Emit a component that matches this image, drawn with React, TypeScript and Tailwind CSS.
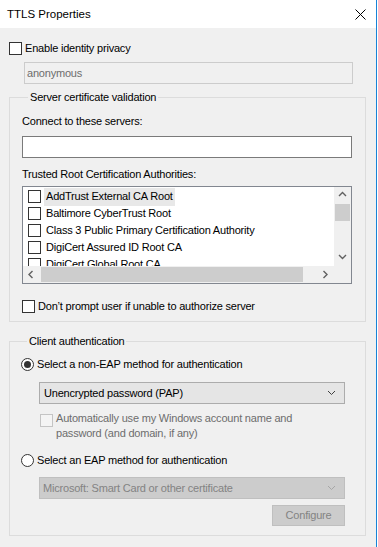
import { useState } from 'react';

const certs = [
  'AddTrust External CA Root',
  'Baltimore CyberTrust Root',
  'Class 3 Public Primary Certification Authority',
  'DigiCert Assured ID Root CA',
  'DigiCert Global Root CA',
];

function Box({ disabled = false }: { disabled?: boolean }) {
  return (
    <span
      className={
        disabled
          ? 'block w-[13px] h-[13px] shrink-0 border border-[#c4c4c4] bg-[#f4f4f4]'
          : 'block w-[13px] h-[13px] shrink-0 border border-[#333333] bg-white'
      }
    />
  );
}

function Radio({ checked }: { checked: boolean }) {
  return (
    <svg width="13" height="13" viewBox="0 0 13 13" className="shrink-0">
      <circle cx="6.5" cy="6.5" r="6" fill="#ffffff" stroke="#333333" strokeWidth="1" />
      {checked && <circle cx="6.5" cy="6.5" r="3.5" fill="#333333" />}
    </svg>
  );
}

function Chevron({ dir, color = '#606060' }: { dir: 'up' | 'down' | 'left' | 'right'; color?: string }) {
  const d = {
    up: 'M1 5 L4.5 1.5 L8 5',
    down: 'M1 2 L4.5 5.5 L8 2',
    left: 'M5.5 1 L2 4.5 L5.5 8',
    right: 'M2.5 1 L6 4.5 L2.5 8',
  }[dir];
  return (
    <svg width="9" height="9" viewBox="0 0 9 9">
      <path d={d} fill="none" stroke={color} strokeWidth="1.4" />
    </svg>
  );
}

function SelectArrow({ color }: { color: string }) {
  return (
    <svg width="9" height="6" viewBox="0 0 9 6">
      <path d="M1 1 L4.5 4.5 L8 1" fill="none" stroke={color} strokeWidth="1" />
    </svg>
  );
}

export default function App() {
  const [method, setMethod] = useState<'pap' | 'eap'>('pap');

  return (
    <div className="w-[378px] h-[547px] flex bg-white font-['Liberation_Sans',Arial,sans-serif] text-[11px] leading-[15px] tracking-[-0.2px] text-black overflow-hidden">
      <div className="w-[376px] flex flex-col bg-[#f0f0f0]">
        {/* title bar */}
        <div className="h-[28px] shrink-0 bg-white flex items-center justify-between pl-[7px] pr-[10px]">
          <span className="text-[11.5px] tracking-normal">TTLS Properties</span>
          <svg width="11" height="11" viewBox="0 0 11 11">
            <path d="M0.5 0.5 L10.5 10.5 M10.5 0.5 L0.5 10.5" stroke="#000" strokeWidth="1" />
          </svg>
        </div>

        <div className="flex items-center pl-[9px] mt-[14px] h-[13px]">
          <Box />
          <span className="ml-[3px]">Enable identity privacy</span>
        </div>

        <div className="ml-[24px] mt-[7px] w-[329px] h-[22px] border border-[#cccccc] bg-[#f0f0f0] text-[#6d6d6d] flex items-center px-[2px]">
          anonymous
        </div>

        {/* server certificate validation */}
        <fieldset className="ml-[9px] mt-[6px] w-[357px] border border-[#dcdcdc] pl-[12px] pb-[8px]">
          <legend className="ml-[6px] px-[2px]">Server certificate validation</legend>
          <div className="mt-[9px]">Connect to these servers:</div>
          <div className="mt-[7px] w-[330px] h-[22px] border border-[#7a7a7a] bg-white" />
          <div className="mt-[9px]">Trusted Root Certification Authorities:</div>

          <div className="mt-[4px] w-[330px] h-[98px] border border-[#828790] flex flex-col">
            <div className="flex h-[79px]">
              <div className="flex-1 bg-white overflow-hidden pt-[1px]">
                {certs.map((c, i) => (
                  <div key={c} className="h-[17px] flex items-center pl-[5px]">
                    <Box />
                    <span className={i === 0 ? 'ml-[3px] px-[2px] bg-[#e8e8e8] h-[18px] flex items-center' : 'ml-[3px] px-[2px]'}>
                      {c}
                    </span>
                  </div>
                ))}
              </div>
              <div className="w-[17px] bg-[#f0f0f0] flex flex-col">
                <div className="h-[17px] flex items-center justify-center">
                  <Chevron dir="up" />
                </div>
                <div className="h-[17px] mx-[1px] bg-[#cdcdcd]" />
                <div className="flex-1" />
                <div className="h-[17px] flex items-center justify-center">
                  <Chevron dir="down" />
                </div>
              </div>
            </div>
            <div className="flex h-[17px] bg-[#f0f0f0]">
              <div className="w-[17px] flex items-center justify-center">
                <Chevron dir="left" />
              </div>
              <div className="ml-[1px] w-[262px] my-[1px] bg-[#cdcdcd]" />
              <div className="flex-1" />
              <div className="w-[17px] flex items-center justify-center">
                <Chevron dir="right" />
              </div>
              <div className="w-[17px]" />
            </div>
          </div>

          <div className="flex items-center mt-[16px] h-[13px]">
            <Box />
            <span className="ml-[3px]">Don’t prompt user if unable to authorize server</span>
          </div>
        </fieldset>

        {/* client authentication */}
        <fieldset className="ml-[9px] mt-[12px] w-[357px] border border-[#dcdcdc] pl-[11px] pb-[9px]">
          <legend className="ml-[6px] px-[2px]">Client authentication</legend>

          <label className="flex items-center mt-[9px] h-[13px]" onClick={() => setMethod('pap')}>
            <Radio checked={method === 'pap'} />
            <span className="ml-[3px]">Select a non-EAP method for authentication</span>
          </label>

          <div className="ml-[18px] mt-[11px] w-[306px] h-[22px] border border-[#acacac] bg-[#e5e5e5] flex items-center justify-between pl-[4px] pr-[8px]">
            <span>Unencrypted password (PAP)</span>
            <SelectArrow color="#404040" />
          </div>

          <div className="ml-[19px] mt-[7px] flex items-start text-[#6d6d6d]">
            <span className="mt-[3px]">
              <Box disabled />
            </span>
            <span className="ml-[3px]">
              Automatically use my Windows account name and
              <br />
              password (and domain, if any)
            </span>
          </div>

          <label className="flex items-center mt-[13px] h-[13px]" onClick={() => setMethod('eap')}>
            <Radio checked={method === 'eap'} />
            <span className="ml-[3px]">Select an EAP method for authentication</span>
          </label>

          <div className="ml-[18px] w-[306px] flex flex-col items-end">
            <div className="mt-[10px] w-full h-[22px] border border-[#bfbfbf] bg-[#cccccc] text-[#838383] flex items-center justify-between pl-[3px] pr-[8px]">
              <span>Microsoft: Smart Card or other certificate</span>
              <SelectArrow color="#a6a6a6" />
            </div>
            <div className="mt-[6px] w-[73px] h-[21px] border border-[#bfbfbf] bg-[#cccccc] text-[#838383] flex items-center justify-center">
              Configure
            </div>
          </div>
        </fieldset>
      </div>
      <div className="w-px bg-[#1883d7]" />
      <div className="w-px bg-white" />
    </div>
  );
}
